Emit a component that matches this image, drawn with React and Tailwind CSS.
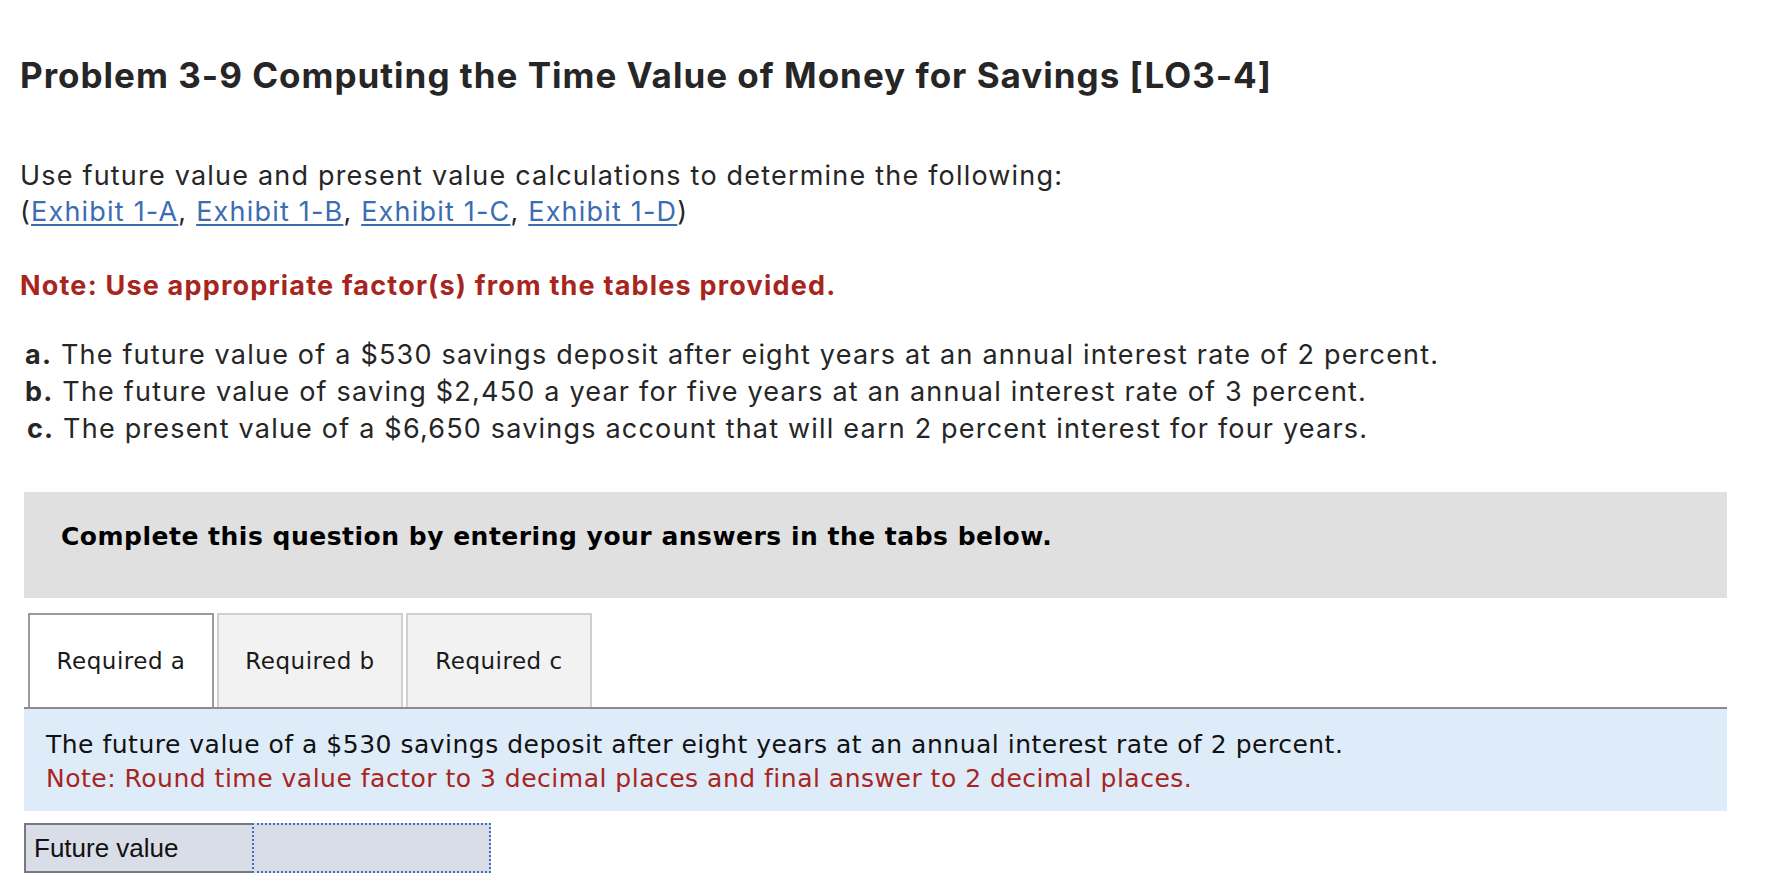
export default function App() {
  const sans = { fontFamily: 'Inter, "Open Sans", sans-serif' };
  return (
    <div className="w-[1774px] h-[876px] overflow-hidden bg-white">
      <div className="pl-[20px] text-[#262626]" style={sans}>
        <h1 className="pt-[53px] text-[35px] leading-[44px] font-bold tracking-[1px]">
          Problem 3-9 Computing the Time Value of Money for Savings [LO3-4]
        </h1>
        <div className="mt-[61px] text-[27px] leading-[36px] tracking-[1.2px]">
          <p>Use future value and present value calculations to determine the following:</p>
          <p>
            (<a className="text-[#3b6db3] underline underline-offset-[3px]">Exhibit 1-A</a>,{" "}
            <a className="text-[#3b6db3] underline underline-offset-[3px]">Exhibit 1-B</a>,{" "}
            <a className="text-[#3b6db3] underline underline-offset-[3px]">Exhibit 1-C</a>,{" "}
            <a className="text-[#3b6db3] underline underline-offset-[3px]">Exhibit 1-D</a>)
          </p>
        </div>
        <p className="mt-[38px] text-[27px] leading-[36px] font-bold tracking-[1.2px] text-[#a8251e]">
          Note: Use appropriate factor(s) from the tables provided.
        </p>
        <div className="mt-[32px] pl-[5px] text-[27px] leading-[37px] tracking-[1.2px]">
          <p><b>a.</b> The future value of a $530 savings deposit after eight years at an annual interest rate of 2 percent.</p>
          <p><b>b.</b> The future value of saving $2,450 a year for five years at an annual interest rate of 3 percent.</p>
          <p className="pl-[2px]"><b>c.</b> The present value of a $6,650 savings account that will earn 2 percent interest for four years.</p>
        </div>
      </div>

      <div className="ml-[24px] w-[1703px]" style={{ fontFamily: '"DejaVu Sans", Verdana, sans-serif' }}>
        <div className="mt-[45px] h-[106px] bg-[#e0e0e0] pl-[37px] pt-[30px]">
          <p className="text-[25px] leading-[30px] font-bold tracking-[0.5px] text-black">
            Complete this question by entering your answers in the tabs below.
          </p>
        </div>

        <div className="mt-[15px] flex items-end gap-[3px] pl-[4px] border-b-2 border-[#8c8c8c]">
          <div className="w-[186px] h-[94px] flex items-center justify-center bg-white border-2 border-b-0 border-[#9a9a9a] text-[23px] tracking-[0.5px] text-[#1a1a1a]">
            Required a
          </div>
          <div className="w-[186px] h-[94px] flex items-center justify-center bg-[#f2f2f2] border-2 border-b-0 border-[#cfcfcf] text-[23px] tracking-[0.5px] text-[#1a1a1a]">
            Required b
          </div>
          <div className="w-[186px] h-[94px] flex items-center justify-center bg-[#f2f2f2] border-2 border-b-0 border-[#cfcfcf] text-[23px] tracking-[0.5px] text-[#1a1a1a]">
            Required c
          </div>
        </div>

        <div className="h-[102px] bg-[#deebf8] pl-[22px] pt-[19px] text-[25px] leading-[34px] tracking-[0.5px]">
          <p className="text-[#111]">
            The future value of a $530 savings deposit after eight years at an annual interest rate of 2 percent.
          </p>
          <p className="text-[#a8251e]">
            Note: Round time value factor to 3 decimal places and final answer to 2 decimal places.
          </p>
        </div>

        <div className="mt-[12px] flex h-[50px]">
          <div
            className="w-[228px] h-full bg-[#d9dde7] border-2 border-r-0 border-[#7a7a7a] pl-[8px] flex items-center text-[26px] text-[#111]"
            style={{ fontFamily: '"Liberation Sans", Arial, sans-serif' }}
          >
            Future value
          </div>
          <div className="w-[239px] h-full bg-[#d9dde7] border-2 border-dotted border-[#3c6fc0]"></div>
        </div>
      </div>
    </div>
  );
}
